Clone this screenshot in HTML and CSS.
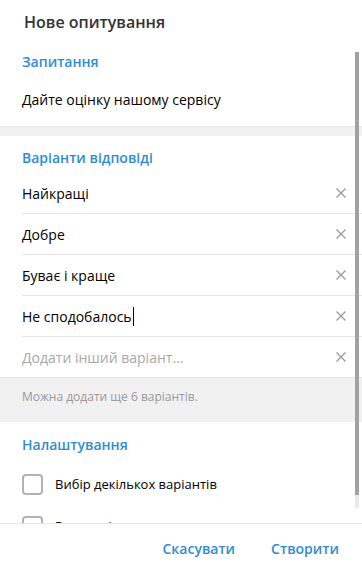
FILE: index.html
```html
<!DOCTYPE html>
<html lang="uk">
<head>
  <meta charset="UTF-8">
  <meta name="viewport" content="width=device-width, initial-scale=1.0">
  <title>Нове опитування</title>
  <link rel="stylesheet" href="styles.css">
</head>
<body>
  <div class="dialog">
    <div class="dialog-title">Нове опитування</div>

    <div class="scroll">
      <div class="section-label">Запитання</div>
      <div class="question">Дайте оцінку нашому сервісу</div>

      <div class="divider"></div>

      <div class="section-label answers-label">Варіанти відповіді</div>
      <div class="options">
        <div class="option"><span class="option-text">Найкращі</span><svg class="remove" viewBox="0 0 10 10"><path d="M0.5 0.5L9.5 9.5M9.5 0.5L0.5 9.5"/></svg></div>
        <div class="option"><span class="option-text">Добре</span><svg class="remove" viewBox="0 0 10 10"><path d="M0.5 0.5L9.5 9.5M9.5 0.5L0.5 9.5"/></svg></div>
        <div class="option"><span class="option-text">Буває і краще</span><svg class="remove" viewBox="0 0 10 10"><path d="M0.5 0.5L9.5 9.5M9.5 0.5L0.5 9.5"/></svg></div>
        <div class="option"><span class="option-text">Не сподобалось<span class="caret"></span></span><svg class="remove" viewBox="0 0 10 10"><path d="M0.5 0.5L9.5 9.5M9.5 0.5L0.5 9.5"/></svg></div>
        <div class="option"><span class="option-text placeholder">Додати інший варіант...</span><svg class="remove" viewBox="0 0 10 10"><path d="M0.5 0.5L9.5 9.5M9.5 0.5L0.5 9.5"/></svg></div>
      </div>

      <div class="hint">Можна додати ще 6 варіантів.</div>

      <div class="section-label settings-label">Налаштування</div>
      <div class="check-row"><span class="checkbox"></span><span>Вибір декількох варіантів</span></div>
      <div class="check-row"><span class="checkbox"></span><span>Режим вікторини</span></div>

      <div class="scrollbar"><div class="thumb"></div></div>
    </div>

    <div class="footer">
      <a class="btn" href="#">Скасувати</a>
      <a class="btn" href="#">Створити</a>
    </div>
  </div>
</body>
</html>
```

FILE: styles.css
```css
body {
  margin: 0;
  padding: 0;
  font-family: "Open Sans", "Noto Sans", sans-serif;
  background-color: #fff;
}

.dialog {
  width: 362px;
  height: 572px;
  display: flex;
  flex-direction: column;
  background-color: #fff;
  overflow: hidden;
}

.dialog-title {
  height: 44px;
  line-height: 44px;
  padding-left: 24px;
  font-size: 16px;
  font-weight: 600;
  color: #333;
  flex-shrink: 0;
}

.scroll {
  position: relative;
  height: 479px;
  overflow: hidden;
  flex-shrink: 0;
}

.section-label {
  padding: 8px 22px 0;
  line-height: 20px;
  font-size: 14px;
  font-weight: 600;
  color: #2f8dd3;
}

.question {
  padding: 18px 22px 16px;
  line-height: 20px;
  font-size: 14px;
  color: #000;
}

.divider {
  height: 10px;
  background-color: #f1f1f1;
  box-shadow: inset 0 1px 1px rgba(0, 0, 0, 0.04);
}

.answers-label {
  padding-top: 12px;
}

.options {
  margin-top: 5px;
  margin-left: 22px;
}

.option {
  height: 40px;
  display: flex;
  align-items: center;
  justify-content: space-between;
  border-bottom: 1px solid #e6e6e6;
  font-size: 14px;
  color: #000;
}

.option:last-child {
  border-bottom: none;
}

.option-text {
  display: flex;
  align-items: center;
}

.placeholder {
  color: #a8a8a8;
}

.caret {
  display: inline-block;
  width: 1px;
  height: 19px;
  background-color: #000;
  margin-left: 1px;
}

.remove {
  width: 10px;
  height: 10px;
  margin-right: 16px;
  fill: none;
  stroke: #9c9c9c;
  stroke-width: 1.4;
}

.hint {
  background-color: #f1f1f1;
  padding: 10px 22px 15px;
  line-height: 20px;
  font-size: 12px;
  color: #999;
  box-shadow: inset 0 1px 1px rgba(0, 0, 0, 0.04);
}

.settings-label {
  padding-top: 13px;
}

.check-row {
  height: 42px;
  margin-top: 8px;
  display: flex;
  align-items: center;
  gap: 12px;
  padding-left: 22px;
  font-size: 13px;
  color: #000;
}

.check-row + .check-row {
  margin-top: 0;
}

.checkbox {
  width: 17px;
  height: 17px;
  border: 2px solid #b2b2b2;
  border-radius: 4px;
  flex-shrink: 0;
}

.scrollbar {
  position: absolute;
  top: 8px;
  right: 3px;
  width: 4px;
  height: 456px;
  background-color: #e8e8e8;
}

.thumb {
  height: 443px;
  background-color: #a2a2a2;
}

.footer {
  flex: 1;
  border-top: 1px solid #e8e8e8;
  display: flex;
  align-items: center;
  justify-content: flex-end;
  gap: 36px;
  padding-right: 23px;
}

.btn {
  font-size: 14px;
  font-weight: 600;
  color: #2f8dd3;
  text-decoration: none;
}
```
